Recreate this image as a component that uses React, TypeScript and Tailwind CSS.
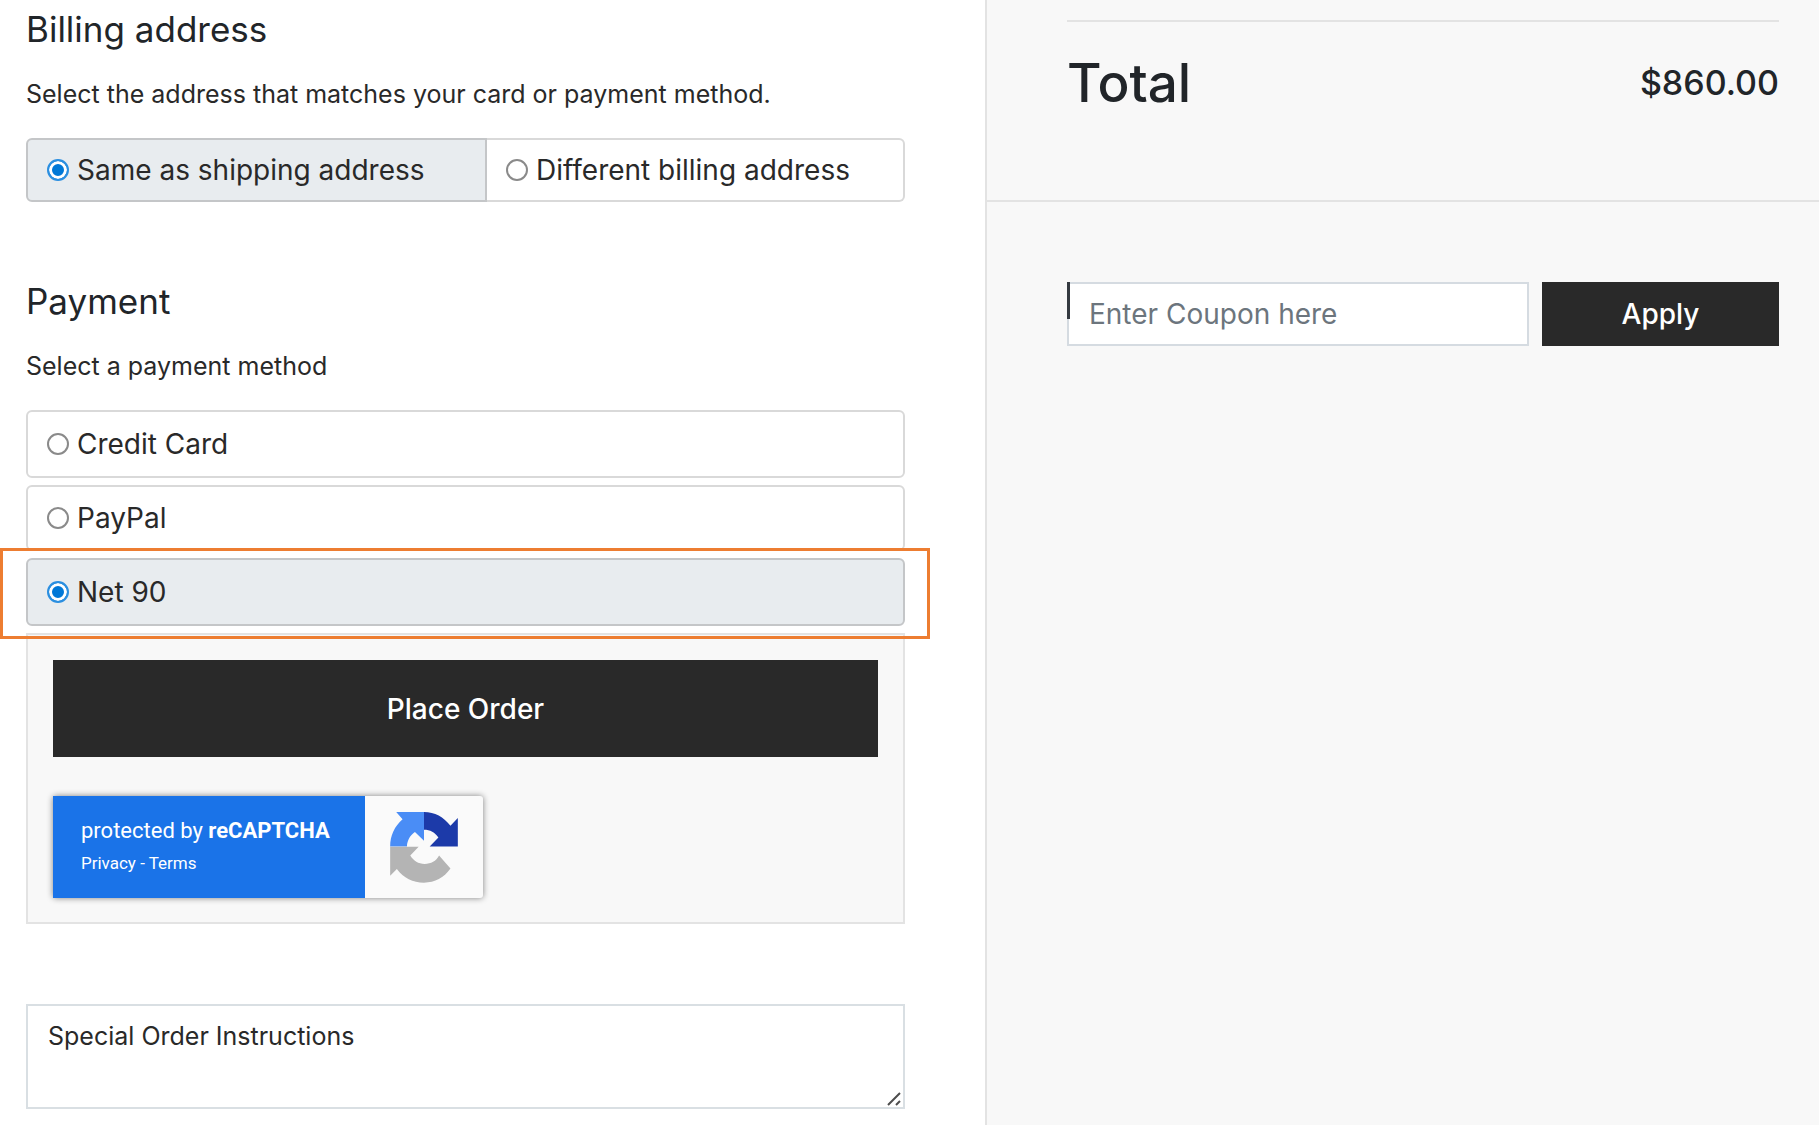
import { useState } from "react"
import type { ReactNode } from "react"

interface OptionProps {
  name: string
  value: string
  selected: string
  onSelect: (value: string) => void
  className?: string
  children: ReactNode
}

function RadioOption({ name, value, selected, onSelect, className = "", children }: OptionProps) {
  const active = selected === value
  return (
    <label
      className={`flex items-center gap-2 border-2 pl-[19px] pr-4 text-[28px] leading-9 text-[#292929] cursor-pointer ${
        active ? "bg-[#e8ecef] border-[#c4c6c8]" : "bg-white border-[#d9d9d9]"
      } ${className}`}
    >
      <input
        type="radio"
        name={name}
        value={value}
        checked={active}
        onChange={() => onSelect(value)}
        className="appearance-none shrink-0 size-[22px] rounded-full border-2 border-[#8a8a8a] bg-white checked:border-[#2b8fe0] checked:bg-[#0078d7] checked:shadow-[inset_0_0_0_3px_#fff]"
      />
      <span>{children}</span>
    </label>
  )
}

function RecaptchaLogo() {
  return (
    <svg viewBox="0 0 202 212" className="w-[68px] h-[71px]" aria-hidden="true">
      <path
        d="M18 0H101V86L74 60C60 70 51 84 50 103H0C0 71 13 43 37 22Z"
        fill="#4a8df6"
      />
      <path
        d="M101 0C133 0 160 15 180 41L202 18V103H118L144 76C134 61 119 53 101 53Z"
        fill="#1c3aa9"
      />
      <path
        d="M0 104H85L60 130C70 146 84 155 103 155C122 155 137 147 146 130L180 169C160 197 134 211 101 211C68 211 40 197 20 170L0 190Z"
        fill="#b4b4b4"
      />
    </svg>
  )
}

function RecaptchaBadge() {
  return (
    <div className="flex w-[430px] h-[102px] rounded-[3px] bg-[#fafafa] shadow-[0_0_6px_#808080] font-['Roboto',sans-serif] text-white">
      <div className="flex flex-col justify-center gap-2 w-[312px] pl-7 pb-1 bg-[#1a73e8]">
        <p className="text-[22px] leading-7">
          protected by <strong className="font-bold">reCAPTCHA</strong>
        </p>
        <p className="text-[17px] leading-5">
          <a href="#privacy">Privacy</a> - <a href="#terms">Terms</a>
        </p>
      </div>
      <div className="flex flex-1 items-center justify-center">
        <RecaptchaLogo />
      </div>
    </div>
  )
}

function BillingAddress() {
  const [billing, setBilling] = useState("same")
  return (
    <section>
      <h2 className="text-[35px] leading-10 text-[#212529]">Billing address</h2>
      <p className="mt-[27px] text-[25px] leading-9 text-[#292929]">
        Select the address that matches your card or payment method.
      </p>
      <div className="mt-[26px] flex">
        <RadioOption
          name="billing"
          value="same"
          selected={billing}
          onSelect={setBilling}
          className="w-[461px] py-[12px] rounded-l-md"
        >
          Same as shipping address
        </RadioOption>
        <RadioOption
          name="billing"
          value="different"
          selected={billing}
          onSelect={setBilling}
          className="flex-1 py-[12px] border-l-0 rounded-r-md"
        >
          Different billing address
        </RadioOption>
      </div>
    </section>
  )
}

function Payment() {
  const [method, setMethod] = useState("net90")
  return (
    <section className="mt-[79px]">
      <h2 className="text-[35px] leading-10 text-[#212529]">Payment</h2>
      <p className="mt-[27px] text-[25px] leading-9 text-[#292929]">Select a payment method</p>
      <div className="mt-[26px] flex flex-col gap-[7px]">
        <RadioOption
          name="method"
          value="card"
          selected={method}
          onSelect={setMethod}
          className="py-[14px] rounded-md"
        >
          Credit Card
        </RadioOption>
        <RadioOption
          name="method"
          value="paypal"
          selected={method}
          onSelect={setMethod}
          className="py-[13px] rounded-md"
        >
          PayPal
        </RadioOption>
        <div className="relative">
          <RadioOption
            name="method"
            value="net90"
            selected={method}
            onSelect={setMethod}
            className="py-[14px] rounded-md"
          >
            Net 90
          </RadioOption>
          {/* callout frame */}
          <div className="absolute -left-[26px] -right-[25px] -top-[10px] -bottom-[13px] border-[3px] border-[#ed7d31] pointer-events-none" />
        </div>
        <div className="border-2 border-[#e3e3e3] bg-[#f8f8f8] px-[25px] pt-[25px] pb-6">
          <button
            type="button"
            className="block w-full h-[97px] mb-[39px] bg-[#292929] text-[28px] font-medium text-white"
          >
            Place Order
          </button>
          <RecaptchaBadge />
        </div>
      </div>
    </section>
  )
}

function Summary() {
  return (
    <aside className="bg-[#f8f8f8] border-l-2 border-[#e3e3e3]">
      <div className="pl-20 pr-10 pt-5 pb-[82px] border-b-2 border-[#e3e3e3]">
        <div className="flex items-center justify-between border-t-2 border-[#e3e3e3] pt-[26px] text-[#212529] font-medium">
          <span className="text-[53px] leading-[70px]">Total</span>
          <span className="text-[34px] leading-10">$860.00</span>
        </div>
      </div>
      <form
        className="flex gap-[13px] pl-20 pr-10 pt-20"
        onSubmit={(event) => event.preventDefault()}
      >
        <div className="relative flex-1">
          <input
            type="text"
            aria-label="Coupon"
            placeholder="Enter Coupon here"
            className="block w-full h-16 px-5 border-2 border-[#d5dbe1] bg-white text-[28px] text-[#292929] placeholder:text-[#6c757d] outline-none"
          />
          <span className="absolute left-0 top-0 w-[3px] h-[37px] bg-[#343a40]" />
        </div>
        <button
          type="submit"
          className="w-[237px] h-16 bg-[#292929] text-[28px] font-medium text-white"
        >
          Apply
        </button>
      </form>
    </aside>
  )
}

export default function App() {
  return (
    <div className="grid grid-cols-[985fr_834fr] min-h-screen bg-white font-['Inter',sans-serif]">
      <main className="pl-[26px] pr-20 pt-[9px] pb-4">
        <BillingAddress />
        <Payment />
        <div className="relative mt-20">
          <textarea
            aria-label="Special Order Instructions"
            defaultValue="Special Order Instructions"
            className="block w-full h-[105px] px-5 py-3 border-2 border-[#d9dfe3] bg-white text-[25px] leading-9 text-[#292929] resize-none outline-none"
          />
          <svg
            viewBox="0 0 14 14"
            className="absolute right-1 bottom-[3px] size-[14px]"
            aria-hidden="true"
          >
            <path d="M1 13L13 1M9 13L13 9" stroke="#4d4d4d" strokeWidth="2" fill="none" />
          </svg>
        </div>
      </main>
      <Summary />
    </div>
  )
}
